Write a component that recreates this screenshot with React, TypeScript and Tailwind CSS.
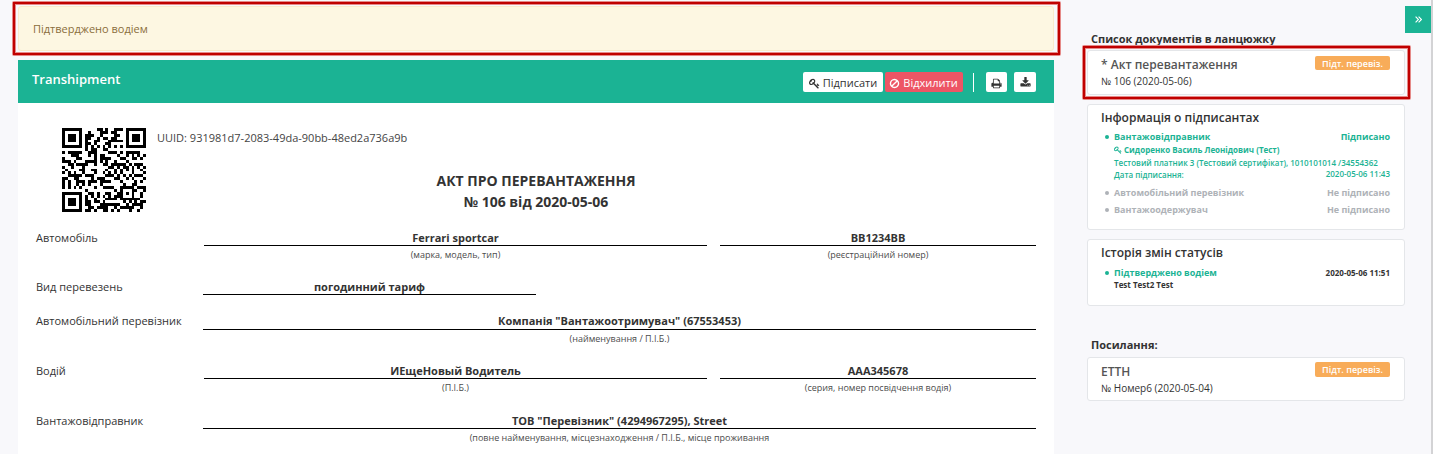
import type { ReactNode } from 'react';

const SIZE = 29;

// Version 3 QR symbol, byte mode, level M.
function encode(text: string, mask: number): boolean[][] {
  const ecLen = 26;
  const dataLen = 70 - ecLen;
  const bits: number[] = [];
  const push = (v: number, n: number) => {
    for (let i = n - 1; i >= 0; i--) bits.push((v >> i) & 1);
  };
  push(4, 4);
  push(text.length, 8);
  for (const c of text) push(c.charCodeAt(0), 8);
  push(0, 4);
  const words: number[] = [];
  for (let i = 0; i < bits.length; i += 8) words.push(parseInt(bits.slice(i, i + 8).join(''), 2));
  for (let p = 0xec; words.length < dataLen; p ^= 0xec ^ 0x11) words.push(p);
  const mul = (a: number, b: number) => {
    let z = 0;
    for (let i = 7; i >= 0; i--) {
      z = (z << 1) ^ ((z >>> 7) * 0x11d);
      z ^= ((b >>> i) & 1) * a;
    }
    return z;
  };
  const gen: number[] = new Array(ecLen).fill(0);
  gen[ecLen - 1] = 1;
  let root = 1;
  for (let i = 0; i < ecLen; i++) {
    for (let j = 0; j < ecLen; j++) {
      gen[j] = mul(gen[j], root);
      if (j + 1 < ecLen) gen[j] ^= gen[j + 1];
    }
    root = mul(root, 2);
  }
  const rem: number[] = new Array(ecLen).fill(0);
  for (const w of words) {
    const f = w ^ (rem.shift() as number);
    rem.push(0);
    gen.forEach((g, i) => {
      rem[i] ^= mul(g, f);
    });
  }
  const all = words.concat(rem);
  const m: boolean[][] = Array.from({ length: SIZE }, () => new Array(SIZE).fill(false));
  const fn: boolean[][] = Array.from({ length: SIZE }, () => new Array(SIZE).fill(false));
  const set = (x: number, y: number, d: boolean) => {
    if (x >= 0 && y >= 0 && x < SIZE && y < SIZE) {
      m[y][x] = d;
      fn[y][x] = true;
    }
  };
  for (let i = 0; i < SIZE; i++) {
    set(6, i, i % 2 === 0);
    set(i, 6, i % 2 === 0);
  }
  for (const [cx, cy] of [[3, 3], [25, 3], [3, 25]])
    for (let dy = -4; dy <= 4; dy++)
      for (let dx = -4; dx <= 4; dx++) {
        const d = Math.max(Math.abs(dx), Math.abs(dy));
        set(cx + dx, cy + dy, d !== 2 && d !== 4);
      }
  for (let dy = -2; dy <= 2; dy++)
    for (let dx = -2; dx <= 2; dx++) set(22 + dx, 22 + dy, Math.max(Math.abs(dx), Math.abs(dy)) !== 1);
  let r = mask;
  for (let i = 0; i < 10; i++) r = (r << 1) ^ ((r >>> 9) * 0x537);
  const f = ((mask << 10) | r) ^ 0x5412;
  const fb = (i: number) => ((f >>> i) & 1) === 1;
  for (let i = 0; i <= 5; i++) set(8, i, fb(i));
  set(8, 7, fb(6));
  set(8, 8, fb(7));
  set(7, 8, fb(8));
  for (let i = 9; i < 15; i++) set(14 - i, 8, fb(i));
  for (let i = 0; i < 8; i++) set(SIZE - 1 - i, 8, fb(i));
  for (let i = 8; i < 15; i++) set(8, SIZE - 15 + i, fb(i));
  set(8, SIZE - 8, true);
  const flip = (x: number, y: number) =>
    [
      (x + y) % 2,
      y % 2,
      x % 3,
      (x + y) % 3,
      (Math.floor(x / 3) + Math.floor(y / 2)) % 2,
      ((x * y) % 2) + ((x * y) % 3),
      (((x * y) % 2) + ((x * y) % 3)) % 2,
      (((x + y) % 2) + ((x * y) % 3)) % 2,
    ][mask] === 0;
  let k = 0;
  for (let right = SIZE - 1; right >= 1; right -= 2) {
    if (right === 6) right = 5;
    for (let v = 0; v < SIZE; v++)
      for (let j = 0; j < 2; j++) {
        const x = right - j;
        const y = ((right + 1) & 2) === 0 ? SIZE - 1 - v : v;
        if (fn[y][x]) continue;
        if (k < 560) m[y][x] = ((all[k >> 3] >>> (7 - (k & 7))) & 1) === 1;
        k++;
        if (flip(x, y)) m[y][x] = !m[y][x];
      }
  }
  return m;
}

const UUID = '931981d7-2083-49da-90bb-48ed2a736a9b';
const qrPath = encode(UUID, 2)
  .map((row, y) => row.map((d, x) => (d ? `M${x} ${y}h1v1h-1z` : '')).join(''))
  .join('');

const KEY =
  'M832 512q0-80-56-136t-136-56-136 56-56 136q0 42 19 83-41-19-83-19-80 0-136 56t-56 136 56 136 136 56 136-56 56-136q0-42-19-83 41 19 83 19 80 0 136-56t56-136zm851 704q0 17-49 66t-66 49q-9 0-28.500-16t-36.500-33-38.500-40-24.500-26l-96 96 220 220q28 28 28 68 0 42-39 81t-81 39q-40 0-68-28l-671-671q-176 131-365 131-163 0-265.500-102.500t-102.500-265.500q0-160 95-313t248-248 313-95q163 0 265.500 102.500t102.500 265.500q0 189-131 365l355 355 96-96q-3-3-26-24.500t-40-38.500-33-36.500-16-28.500q0-17 49-66t66-49q13 0 23 10 6 6 46 44.500t82 79.500 86.500 86 73 78 28.500 41z';
const BAN =
  'M1440 893q0-161-87-295l-754 753q137 89 297 89 111 0 211.500-43.500t173.500-116.500 116-174.500 43-212.500zm-999 299l755-754q-135-91-300-91-148 0-273 73t-198 199-73 274q0 162 89 299zm1223-299q0 157-61 300t-163.500 246-245 164-298.500 61-298.500-61-245-164-163.500-246-61-300 61-299.500 163.500-245.500 245-164 298.500-61 298.500 61 245 164 163.500 245.500 61 299.500z';
const PRINT =
  'M448 1536h896v-256h-896v256zm0-640h896v-384h-160q-40 0-68-28t-28-68v-160h-640v640zm1152 64q0-26-19-45t-45-19-45 19-19 45 19 45 45 19 45-19 19-45zm128 0v416q0 13-9.500 22.500t-22.500 9.500h-224v160q0 40-28 68t-68 28h-960q-40 0-68-28t-28-68v-160h-224q-13 0-22.500-9.500t-9.500-22.500v-416q0-79 56.500-135.500t135.500-56.500h64v-544q0-40 28-68t68-28h672q40 0 88 20t76 48l152 152q28 28 48 76t20 88v256h64q79 0 135.500 56.500t56.500 135.500z';
const DOWNLOAD =
  'M1344 1344q0-26-19-45t-45-19-45 19-19 45 19 45 45 19 45-19 19-45zm256 0q0-26-19-45t-45-19-45 19-19 45 19 45 45 19 45-19 19-45zm128-224v320q0 40-28 68t-68 28h-1472q-40 0-68-28t-28-68v-320q0-40 28-68t68-28h465l135 136q58 56 136 56t136-56l136-136h464q40 0 68 28t28 68zm-325-569q17 41-14 70l-448 448q-18 19-45 19t-45-19l-448-448q-31-29-14-70 17-39 59-39h256v-448q0-26 19-45t45-19h256q26 0 45 19t19 45v448h256q42 0 59 39z';

function Icon({ d, className }: { d: string; className: string }) {
  return (
    <svg viewBox="0 0 1792 1792" fill="currentColor" className={`shrink-0 ${className}`}>
      <path d={d} />
    </svg>
  );
}

function Field({ value, note, className, box }: { value: string; note?: string; className: string; box: string }) {
  return (
    <div className={`text-center ${className}`}>
      <div className={`border-b border-black text-[11px] leading-[16px] font-bold ${box}`}>{value}</div>
      {note && <div className="mt-px text-[9px] leading-[15px] text-[#4c4c4c]">{note}</div>}
    </div>
  );
}

function Row({ label, className, children }: { label: string; className: string; children: ReactNode }) {
  return (
    <div className={`flex ${className}`}>
      <div className="w-[167px] shrink-0 text-[11px] leading-[16px]">{label}</div>
      {children}
    </div>
  );
}

function Card({ className, children }: { className: string; children: ReactNode }) {
  return <div className={`w-[318px] rounded-[3px] border border-[#e4e6e9] bg-white pl-[13px] pr-[14px] ${className}`}>{children}</div>;
}

function DocCard({ title, sub, className, badge }: { title: string; sub: string; className: string; badge: string }) {
  return (
    <Card className={className}>
      <div className="flex h-[18px] items-start justify-between">
        <div className="text-[12px] leading-[19px] font-semibold text-[#555]">{title}</div>
        <div className={`w-[75px] rounded-[2px] bg-[#f8ac59] text-center text-[9px] leading-[15px] font-semibold text-white ${badge}`}>Підт. перевіз.</div>
      </div>
      <div className="text-[10px] leading-[16px]">{sub}</div>
    </Card>
  );
}

function Status({ name, state, className, right }: { name: string; state: string; className: string; right: string }) {
  return (
    <div className={`flex items-center text-[9px] leading-[17px] font-bold ${className}`}>
      <span className="mr-[5px] ml-[4px] size-[4px] rounded-full bg-current" />
      <span>{name}</span>
      <span className={`ml-auto ${right}`}>{state}</span>
    </div>
  );
}

export default function App() {
  return (
    <div className="relative flex h-[454px] w-[1433px] overflow-hidden bg-[#f8f8fb] font-['Open_Sans','Noto_Sans',sans-serif] text-[#333]">
      <main className="ml-[18px] flex w-[1036px] shrink-0 flex-col pt-[6px]">
        <div className="h-[45px] rounded-[3px] border border-[#faebcc] bg-[#fdf7e2] pl-[14px] text-[11px] leading-[43px] text-[#8a6d3b]">
          Підтверджено водіем
        </div>
        <header className="mt-[9px] flex h-[43px] shrink-0 bg-[#1bb394] pt-[12px] pl-[14px] text-white">
          <div className="-mt-px text-[13px] leading-[16px] font-semibold">Transhipment</div>
          <div className="ml-auto flex h-[20px] items-center pr-[18px] text-[11px]">
            <button className="flex h-[20px] w-[80px] items-center justify-center gap-[3px] rounded-[2px] bg-white pt-[2px] text-[#333]">
              <Icon d={KEY} className="size-[11px]" />
              <span>Підписати</span>
            </button>
            <button className="ml-[2px] flex h-[20px] w-[78px] items-center justify-center gap-[3px] rounded-[2px] bg-[#ed5565] pt-[2px] pr-px">
              <Icon d={BAN} className="size-[11px]" />
              <span>Відхилити</span>
            </button>
            <span className="ml-[10px] h-[19px] w-px bg-white" />
            <button className="ml-[12px] flex h-[20px] w-[21px] items-center justify-center rounded-[2px] bg-white pt-[2px] text-[#333]">
              <Icon d={PRINT} className="size-[11px]" />
            </button>
            <button className="ml-[7px] flex h-[20px] w-[22px] items-center justify-center rounded-[2px] bg-white text-[#333]">
              <Icon d={DOWNLOAD} className="size-[11px]" />
            </button>
          </div>
        </header>
        <section className="flex-1 bg-white pt-[25px] pl-[18px]">
          <div className="flex h-[102px]">
            <svg viewBox="0 0 29 29" shapeRendering="crispEdges" className="ml-[26px] size-[84px]">
              <path d={qrPath} />
            </svg>
            <div className="ml-[11px] pt-[2px] text-[11px] leading-[16px] text-[#444]">
              UUID: {UUID}
              <div className="ml-[229px] w-[300px] pt-[24px] text-center text-[14px] leading-[21px] font-bold text-[#333]">
                <div>АКТ ПРО ПЕРЕВАНТАЖЕННЯ</div>
                <div>№ 106 від 2020-05-06</div>
              </div>
            </div>
          </div>
          <Row label="Автомобіль" className="h-[49px]">
            <Field value="Ferrari sportcar" note="(марка, модель, тип)" className="ml-px w-[503px]" box="h-[16px]" />
            <Field value="BB1234BB" note="(реєстраційний номер)" className="ml-[13px] w-[316px]" box="h-[16px]" />
          </Row>
          <Row label="Вид перевезень" className="h-[34px]">
            <Field value="погодинний тариф" className="w-[333px]" box="h-[16px]" />
          </Row>
          <Row label="Автомобільний перевізник" className="h-[50px]">
            <Field value={'Компанія "Вантажоотримувач" (67553453)'} note="(найменування / П.І.Б.)" className="w-[833px]" box="h-[17px]" />
          </Row>
          <Row label="Водій" className="h-[50px]">
            <Field value="ИЕщеНовый Водитель" note="(П.І.Б.)" className="ml-px w-[503px]" box="h-[16px]" />
            <Field value="AAA345678" note="(серия, номер посвідчення водія)" className="ml-[13px] w-[316px]" box="h-[16px]" />
          </Row>
          <Row label="Вантажовідправник" className="h-[41px]">
            <Field value={'ТОВ "Перевізник" (4294967295), Street'} note="(повне найменування, місцезнаходження / П.І.Б., місце проживання" className="w-[833px]" box="h-[16px]" />
          </Row>
        </section>
      </main>

      <aside className="ml-[33px] flex w-[318px] shrink-0 flex-col pt-[31px]">
        <h2 className="pl-[4px] text-[11px] leading-[16px] font-bold">Список документів в ланцюжку</h2>
        <DocCard title="* Акт перевантаження" sub="№ 106 (2020-05-06)" className="mt-[3px] h-[45px] pt-[4px]" badge="mt-px h-[14px]" />
        <Card className="mt-[9px] h-[126px] pt-[3px]">
          <div className="h-[18px] text-[12px] leading-[19px] font-semibold">Інформація о підписантах</div>
          <Status name="Вантажовідправник" state="Підписано" className="mt-[2px] text-[#1bb394]" right="" />
          <div className="pl-[13px] text-[8px] leading-[12px] font-semibold text-[#1bb394]">
            <div className="-mt-px flex items-center gap-[2px] leading-[12px] font-bold">
              <Icon d={KEY} className="size-[8px]" />
              Сидоренко Василь Леонідович (Тест)
            </div>
            <div className="mt-px whitespace-nowrap">Тестовий платник 3 (Тестовий сертифікат), 1010101014 /34554362</div>
            <div className="flex justify-between">
              <span>Дата підписання:</span>
              <span className="-mt-px mb-px">2020-05-06 11:43</span>
            </div>
          </div>
          <Status name="Автомобільний перевізник" state="Не підписано" className="mt-[3px] text-[#aeb2b7]" right="" />
          <Status name="Вантажоодержувач" state="Не підписано" className="text-[#aeb2b7]" right="" />
        </Card>
        <Card className="mt-[9px] h-[67px] pt-[3px]">
          <div className="h-[18px] text-[12px] leading-[19px] font-semibold">Історія змін статусів</div>
          <Status name="Підтверджено водіем" state="2020-05-06 11:51" className="mt-[3px] text-[#1bb394]" right="text-[8px] text-[#333]" />
          <div className="-mt-px pl-[13px] text-[8px] leading-[9px] font-bold">Test Test2 Test</div>
        </Card>
        <h2 className="mt-[31px] pl-[4px] text-[11px] leading-[16px] font-bold">Посилання:</h2>
        <DocCard title="ЕТТН" sub="№ Номер6 (2020-05-04)" className="mt-[4px] h-[44px] pt-[4px]" badge="h-[15px]" />
      </aside>

      <button className="mt-[6px] flex h-[27px] w-[26px] shrink-0 items-center justify-center bg-[#1bb394]">
        <svg viewBox="0 0 7 7" fill="none" stroke="white" strokeWidth="1.1" className="size-[7px]">
          <path d="M.6.6l2.800 2.900L.6 6.400M3.600.6l2.800 2.900-2.800 2.900" />
        </svg>
      </button>
      <span className="h-full w-[2px] bg-[#d3d3d5]" />

      <div className="absolute top-[1px] left-[12px] h-[55px] w-[1049px] rounded-[2px] border-4 border-[#e58a88]">
        <div className="absolute -inset-[3px] border-2 border-[#c00000]" />
      </div>
      <div className="absolute top-[45px] left-[1082px] h-[55px] w-[329px] rounded-[2px] border-4 border-[#e58a88]">
        <div className="absolute -inset-[3px] border-2 border-[#c00000]" />
      </div>
    </div>
  );
}
